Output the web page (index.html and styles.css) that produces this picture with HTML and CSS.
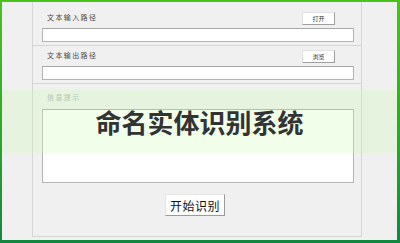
FILE: index.html
```html
<!DOCTYPE html>
<html lang="zh-CN">
<head>
    <meta charset="UTF-8">
    <title>命名实体识别系统</title>
    <link rel="stylesheet" href="styles.css">
</head>
<body>

    <div class="window">
        <div class="panel">
            <div class="section first">
                <div class="row">
                    <span class="label">文本输入路径</span>
                    <button class="small-btn">打开</button>
                </div>
                <input class="path-input" type="text">
            </div>

            <div class="section">
                <div class="row">
                    <span class="label">文本输出路径</span>
                    <button class="small-btn">浏览</button>
                </div>
                <input class="path-input" type="text">
            </div>

            <div class="section last">
                <span class="label faded">信息提示</span>
                <textarea class="info-box"></textarea>
                <button class="start-btn">开始识别</button>
            </div>
        </div>

        <!-- title banner over the form -->
        <div class="banner">命名实体识别系统</div>
    </div>

</body>
</html>
```

FILE: styles.css
```css
body {
    margin: 0;
    background-color: #f0f0f0;
    font-family: "Noto Sans CJK SC", "Noto Sans", sans-serif;
}
.window {
    position: relative;
    width: 400px;
    height: 243px;
    box-sizing: border-box;
    border-style: solid;
    border-width: 2px 3px 3px 2px;
    border-image: linear-gradient(to bottom, #4ac31b, #2aa628 60%, #118840) 1;
    background-color: #f0f0f0;
}
.panel {
    margin-left: 30px;
    width: 330px;
    height: 235px;
    box-sizing: border-box;
    border: 1px solid #d6d6d6;
    border-top: none;
    display: flex;
    flex-direction: column;
}
.section {
    padding: 4px 7px 3px 9px;
    border-bottom: 1px solid #d6d6d6;
    display: flex;
    flex-direction: column;
}
.section.first {
    padding-top: 10px;
}
.section.last {
    border-bottom: none;
    padding-top: 9px;
    align-items: flex-start;
}
.row {
    display: flex;
    justify-content: space-between;
    align-items: flex-start;
    margin-bottom: 3px;
}
.label {
    font-size: 7px;
    line-height: 8px;
    letter-spacing: 1.4px;
    color: #4a4a4a;
    margin-left: 5px;
    margin-top: 1px;
}
.label.faded {
    color: #b0b0b0;
    margin-top: 0;
}
.small-btn {
    width: 33px;
    height: 13px;
    margin-right: 19px;
    padding: 0;
    font-family: inherit;
    font-size: 6px;
    color: #333;
    background-color: #fff;
    border: 1px solid #e2e2e2;
    border-right-color: #a0a0a0;
    border-bottom-color: #a0a0a0;
}
.path-input {
    width: 312px;
    height: 14px;
    box-sizing: border-box;
    margin: 0;
    padding: 0;
    background-color: #fff;
    border: 1px solid #b4b4b4;
    border-top-color: #a8a8a8;
    outline: none;
}
.info-box {
    width: 312px;
    height: 74px;
    box-sizing: border-box;
    margin: 8px 0 0 0;
    padding: 0;
    resize: none;
    background-color: #fff;
    border: 1px solid #b4b4b4;
    border-top-color: #a8a8a8;
}
.start-btn {
    align-self: center;
    margin: 11px 6px 0 0;
    width: 60px;
    height: 22px;
    padding: 0;
    font-family: "Noto Sans CJK SC", serif;
    font-size: 12px;
    letter-spacing: 0.5px;
    color: #111;
    background-color: #fff;
    border: 1px solid #e6e6e6;
    border-right-color: #9a9a9a;
    border-bottom-color: #9a9a9a;
}
.banner {
    position: absolute;
    left: 0;
    right: 0;
    top: 88px;
    height: 63px;
    display: flex;
    justify-content: center;
    align-items: center;
    background-color: rgba(200, 250, 180, 0.28);
    font-size: 26px;
    font-weight: bold;
    color: #333;
    letter-spacing: 0;
}
```
